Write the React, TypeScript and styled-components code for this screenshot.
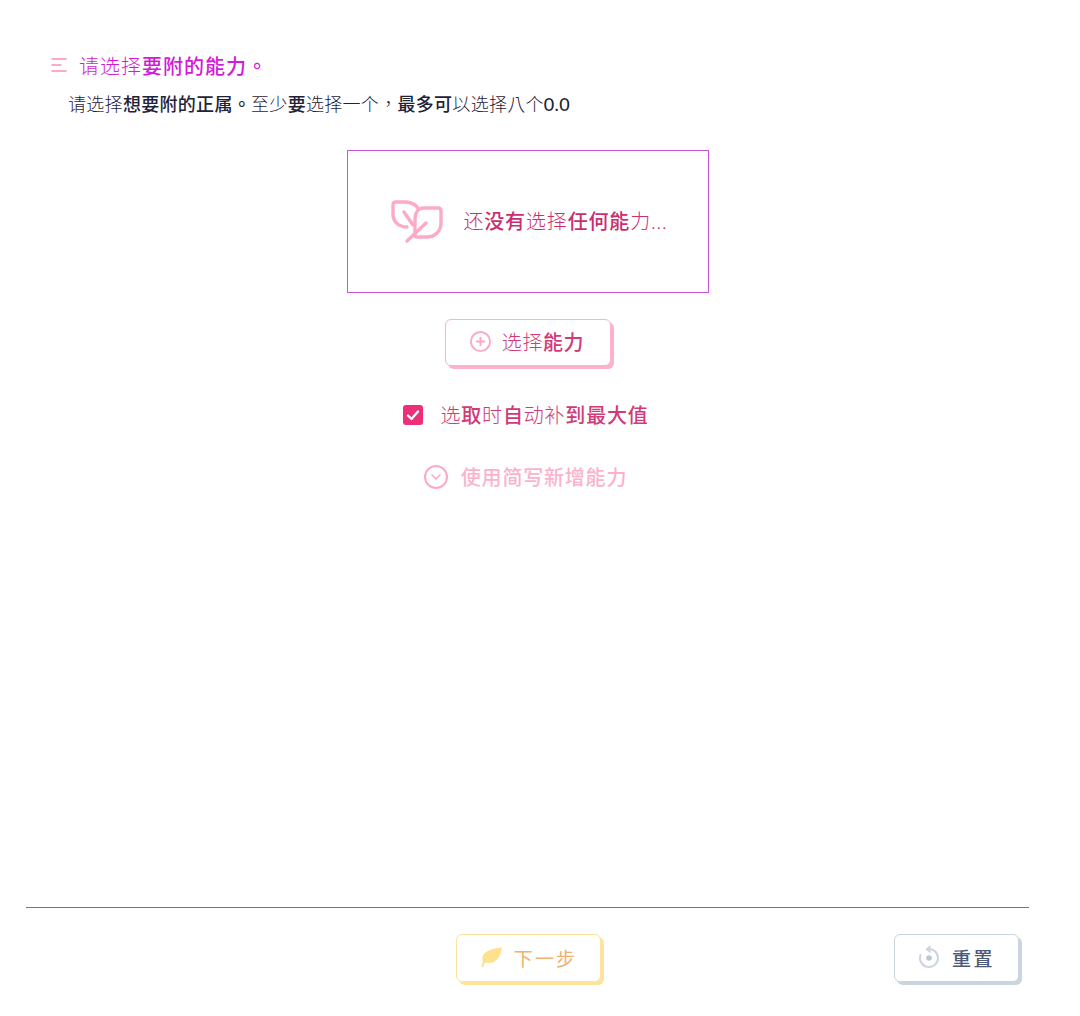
import styled, { createGlobalStyle } from 'styled-components';
import { LuCirclePlus, LuChevronDown } from 'react-icons/lu';

const GlobalStyle = createGlobalStyle`
    html, body {
        margin: 0;
        padding: 0;
        background: #fff;
    }
    body {
        font-family: "Lato", "Noto Sans CJK TC", sans-serif;
        font-weight: 400;
    }
`;

const Page = styled.div`
    width: 1080px;
    height: 1016px;
    box-sizing: border-box;
    padding: 52px 51px 34px 26px;
    display: flex;
    flex-direction: column;
    overflow: hidden;
`;

const Strong = styled.span`
    font-weight: 500;
`;

const Heading = styled.div`
    display: flex;
    align-items: center;
    column-gap: 11px;
    padding-left: 25px;
    height: 26px;
    font-size: 20px;
    font-weight: 300;
    letter-spacing: 1px;
    color: #d21bd6;
`;

const SubTitle = styled.div`
    margin-top: 13px;
    padding-left: 42px;
    height: 26px;
    line-height: 26px;
    font-size: 18px;
    font-weight: 300;
    letter-spacing: 0.3px;
    color: #1f2338;
`;

const Center = styled.div`
    display: flex;
    flex-direction: column;
    align-items: center;
    flex: 1;
`;

const EmptyBox = styled.div`
    margin-top: 33px;
    width: 362px;
    height: 143px;
    box-sizing: border-box;
    border: 1px solid #c653dc;
    padding: 0 0 2px 4px;
    display: flex;
    align-items: center;
    justify-content: center;
    column-gap: 19px;
    font-size: 20px;
    font-weight: 300;
    letter-spacing: 0.85px;
    color: #c92f70;
`;

const Button = styled.div<{ $edge: string; $color: string }>`
    display: flex;
    align-items: center;
    justify-content: center;
    box-sizing: border-box;
    height: 48px;
    padding-bottom: 2px;
    background: #fff;
    border: 1px solid ${p => p.$edge};
    border-radius: 6px;
    box-shadow: 3px 3px 0 0 ${p => p.$edge};
    color: ${p => p.$color};
    font-size: 20px;
`;

const AddButton = styled(Button)`
    margin-top: 26px;
    width: 166px;
    height: 47px;
    padding-right: 2px;
    column-gap: 10px;
    letter-spacing: 0.6px;
    font-weight: 300;
`;

const CheckRow = styled.label`
    margin: 34px 3px 0 0;
    display: flex;
    align-items: center;
    column-gap: 17px;
    font-size: 20px;
    font-weight: 300;
    letter-spacing: 0.8px;
    color: #d13a78;
`;

const CheckBox = styled.span`
    width: 20px;
    height: 20px;
    border-radius: 3px;
    background: #ec2f78;
    display: flex;
    align-items: center;
    justify-content: center;
`;

const Toggle = styled.div`
    margin: 33px 4px 0 0;
    display: flex;
    align-items: center;
    column-gap: 13px;
    font-size: 20px;
    font-weight: 500;
    letter-spacing: 0.8px;
    color: #fdb1cb;
`;

const ToggleIcon = styled.span`
    width: 24px;
    height: 24px;
    box-sizing: border-box;
    border: 2px solid #fcaac8;
    border-radius: 50%;
    display: flex;
    align-items: center;
    justify-content: center;
`;

const Footer = styled.div`
    border-top: 1px solid #d035d8;
    padding: 26px 10px 0 12px;
    display: grid;
    grid-template-columns: 1fr auto 1fr;
    align-items: center;
`;

const NextButton = styled(Button)`
    grid-column: 2;
    width: 145px;
    column-gap: 11px;
    letter-spacing: 2.2px;
    font-size: 19px;
`;

const ResetButton = styled(Button)`
    grid-column: 3;
    justify-self: end;
    width: 125px;
    column-gap: 12px;
    letter-spacing: 2.5px;
    font-size: 19px;
    font-weight: 500;
`;

const MenuIcon = () => (
    <svg width="17" height="16" viewBox="0 0 17 16" fill="none" stroke="#fcaac8" strokeWidth="1.8">
        <path d="M0.5 2h15M0.5 8h10M0.5 14h15" />
    </svg>
);

const LeavesIcon = () => (
    <svg width="53" height="46" viewBox="0 0 53 46" fill="none" stroke="#fcaac8" strokeWidth="3.4" strokeLinecap="round" strokeLinejoin="round">
        <path d="M16 29C7 29 2 23 2 16V7Q2 4 5 4H15C20 4 25 7 27 10" />
        <path d="M13 14L22 27" />
        <path d="M50 13Q50 10 47 10H33C27 10 24 15 24 21V38C24 39 25 39 26 39H36C44 39 50 33 50 25Z" />
        <path d="M35 25L16 43" />
    </svg>
);

const CheckMark = () => (
    <svg width="14" height="14" viewBox="0 0 14 14" fill="none" stroke="#fff" strokeWidth="2.4" strokeLinecap="round" strokeLinejoin="round">
        <path d="M2 7.5L5.5 11L12 3.5" />
    </svg>
);

const SolidLeaf = () => (
    <svg width="23" height="21" viewBox="0 0 22 21" fill="#fee08f">
        <path d="M21.5 0.5C20.5 8 17 16 8 16C6.5 16 5.5 15.8 4.5 15.5L2.5 20.5L1 19.8C1.2 18 1.8 16.2 2.5 14.5C-0.5 6 9 1.5 21.5 0.5Z" />
    </svg>
);

const ResetIcon = () => (
    <svg width="22" height="22" viewBox="0 0 22 22" fill="none" stroke="#ccd5e0" strokeWidth="2" strokeLinecap="round" strokeLinejoin="round">
        <path d="M9 3.2A9 9 0 1 1 2.5 9" />
        <path d="M12 0.8L9 3.2L12 5.8" />
        <circle cx="11" cy="12" r="2.8" fill="#bcc5d2" stroke="none" />
    </svg>
);

const App = () => <>
    <GlobalStyle />
    <Page>
        <Heading>
            <MenuIcon />
            <span>请选择<Strong>要附的能力。</Strong></span>
        </Heading>
        <SubTitle>
            请选择<Strong>想要附的正属。</Strong>至少<Strong>要</Strong>选择一个，<Strong>最多可</Strong>以选择八个<Strong>0.0</Strong>
        </SubTitle>
        <Center>
            <EmptyBox>
                <LeavesIcon />
                <span>还<Strong>没有</Strong>选择<Strong>任何能</Strong>力...</span>
            </EmptyBox>
            <AddButton $edge="#fdb1cb" $color="#d13a78">
                <LuCirclePlus size={23} color="#fcaac8" />
                <span>选择<Strong>能力</Strong></span>
            </AddButton>
            <CheckRow>
                <CheckBox><CheckMark /></CheckBox>
                <span>选<Strong>取</Strong>时<Strong>自</Strong>动补<Strong>到最大值</Strong></span>
            </CheckRow>
            <Toggle>
                <ToggleIcon><LuChevronDown size={16} color="#fcaac8" strokeWidth={2.5} /></ToggleIcon>
                使用简写新增能力
            </Toggle>
        </Center>
        <Footer>
            <NextButton $edge="#fee39a" $color="#f0b06e"><SolidLeaf />下一步</NextButton>
            <ResetButton $edge="#cbd5e0" $color="#4a5a78"><ResetIcon />重置</ResetButton>
        </Footer>
    </Page>
</>;

export default App;
